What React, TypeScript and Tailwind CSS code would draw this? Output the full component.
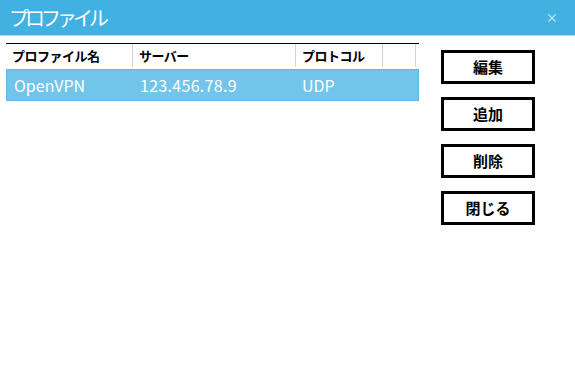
import { X } from 'lucide-react';

const font = { fontFamily: '"Noto Sans CJK JP", "Noto Sans", sans-serif' };

const columns = [
    { label: 'プロファイル名', width: 'w-[127px]' },
    { label: 'サーバー', width: 'w-[163px]' },
    { label: 'プロトコル', width: 'w-[87px]' },
    { label: '', width: 'w-[33px]' },
];

const buttons = ['編集', '追加', '削除', '閉じる'];

export default function App() {
    return (
        <div className="w-[575px] h-[375px] bg-white overflow-hidden" style={font}>
            <div className="flex items-center justify-between h-9 bg-[#41b1e1] border-b border-[#a9dcf2] pl-[9px] pr-4">
                <h1 className="text-[20px] text-white tracking-[-4px] leading-none">プロファイル</h1>
                <X className="w-3.5 h-3.5 text-white/60" strokeWidth={2} />
            </div>

            <div className="flex pt-[7px]">
                <div className="ml-[6px] w-[413px]">
                    <div className="flex h-[25px] border-t border-black">
                        {columns.map((col, i) => (
                            <div
                                key={i}
                                className={`${col.width} flex items-center pl-[6px] border-r border-[#d2d2d2] text-[13px] font-bold text-black tracking-[-0.5px] mb-[1px]`}
                            >
                                {col.label}
                            </div>
                        ))}
                    </div>
                    <div className="flex items-center h-[32px] mt-[1px] bg-[#72c5ea] border border-[#64bbe6] text-white text-[16px]">
                        <span className="w-[127px] pl-[7px]">OpenVPN</span>
                        <span className="w-[163px] pl-[6px] tracking-[0.3px]">123.456.78.9</span>
                        <span className="pl-[5px]">UDP</span>
                    </div>
                </div>

                <div className="ml-[22px] mt-[7px] flex flex-col gap-[13px]">
                    {buttons.map((b) => (
                        <button
                            key={b}
                            className="w-[94px] h-[34px] border-[3px] border-black bg-white text-[15px] font-bold text-black"
                        >
                            {b}
                        </button>
                    ))}
                </div>
            </div>
        </div>
    );
}
